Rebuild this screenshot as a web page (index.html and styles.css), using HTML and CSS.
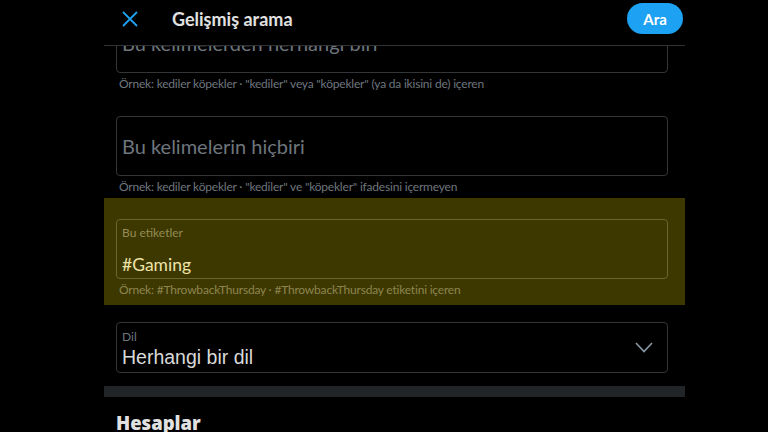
FILE: index.html
```html
<!DOCTYPE html>
<html lang="tr">
<head>
    <meta charset="UTF-8">
    <meta name="viewport" content="width=device-width, initial-scale=1.0">
    <title>Gelişmiş arama</title>
    <link rel="stylesheet" href="styles.css">
</head>
<body>

<div class="page">
    <header class="topbar">
        <button class="close-btn" aria-label="Kapat">
            <svg viewBox="0 0 16 16" width="16" height="16">
                <path d="M1.5 1.5 L14.5 14.5 M14.5 1.5 L1.5 14.5" stroke="#1da1f2" stroke-width="1.8" fill="none" stroke-linecap="round"/>
            </svg>
        </button>
        <h1>Gelişmiş arama</h1>
        <button class="search-btn">Ara</button>
    </header>

    <main class="scroller">
        <div class="form-body">
            <div class="field-group">
                <div class="field">
                    <span class="placeholder">Bu kelimelerden herhangi biri</span>
                </div>
                <p class="hint">Örnek: kediler köpekler · "kediler" veya "köpekler" (ya da ikisini de) içeren</p>
            </div>

            <div class="field-group">
                <div class="field">
                    <span class="placeholder">Bu kelimelerin hiçbiri</span>
                </div>
                <p class="hint">Örnek: kediler köpekler · "kediler" ve "köpekler" ifadesini içermeyen</p>
            </div>

            <div class="field-group marked">
                <div class="field filled">
                    <span class="field-label">Bu etiketler</span>
                    <span class="field-value">#Gaming</span>
                </div>
                <p class="hint">Örnek: #ThrowbackThursday · #ThrowbackThursday etiketini içeren</p>
            </div>

            <div class="field-group select-group">
                <div class="field select">
                    <div class="select-text">
                        <span class="field-label">Dil</span>
                        <span class="select-value">Herhangi bir dil</span>
                    </div>
                    <svg class="chevron" viewBox="0 0 18 11" width="18" height="11">
                        <path d="M1 1 L9 9.5 L17 1" stroke="#8b98a5" stroke-width="1.6" fill="none"/>
                    </svg>
                </div>
            </div>

            <div class="divider"></div>

            <section class="accounts">
                <h2>Hesaplar</h2>
            </section>
        </div>
    </main>
</div>

</body>
</html>
```

FILE: styles.css
```css
body {
    margin: 0;
    background-color: #000;
    font-family: Lato, "Open Sans", sans-serif;
    height: 432px;
    overflow: hidden;
}

.page {
    width: 581px;
    margin-left: 104px;
}

/* top bar */
.topbar {
    display: flex;
    align-items: center;
    height: 37px;
    padding-bottom: 8px;
    border-bottom: 1px solid #2f3336;
}

.close-btn {
    display: flex;
    padding: 0;
    margin-left: 18px;
    background: none;
    border: none;
}

.topbar h1 {
    margin: 0 0 0 34px;
    font-size: 18px;
    font-weight: 700;
    color: #e1e1e1;
}

.search-btn {
    margin-left: auto;
    margin-right: 2px;
    width: 56px;
    height: 31px;
    border: none;
    border-radius: 16px;
    background-color: #1da1f2;
    color: #fff;
    font-family: inherit;
    font-size: 15px;
    font-weight: 700;
}

/* scrolled form area */
.scroller {
    height: 386px;
    overflow: hidden;
}

.form-body {
    margin-top: -50px;
}

.field-group {
    padding: 17px 17px 0 12px;
}

.field {
    display: flex;
    flex-direction: column;
    justify-content: center;
    height: 60px;
    box-sizing: border-box;
    padding: 0 5px;
    border: 1px solid #333639;
    border-radius: 4px;
}

.placeholder {
    font-size: 20px;
    color: #6e767d;
}

.hint {
    margin: 0;
    height: 26px;
    padding: 3px 0 0 3px;
    box-sizing: border-box;
    font-size: 12px;
    line-height: 16px;
    letter-spacing: -0.2px;
    color: #6e767d;
}

/* highlighted hashtag field */
.marked {
    margin-top: -4px;
    padding-top: 21px;
    background-color: #3d3800;
}

.marked .field {
    border-color: #6b6330;
}

.marked .hint {
    color: #8d8550;
}

.field.filled {
    justify-content: flex-start;
    padding-top: 5px;
}

.field-label {
    font-size: 12px;
    line-height: 16px;
    color: #6e767d;
}

.marked .field-label {
    color: #948b55;
}

.field-value {
    margin-top: 12px;
    font-size: 17.5px;
    line-height: 24px;
    color: #efe4a8;
}

/* language select */
.select-group {
    padding-bottom: 13px;
}

.field.select {
    flex-direction: row;
    align-items: center;
    height: 51px;
}

.select-text {
    flex: 1;
    display: flex;
    flex-direction: column;
    padding-top: 1px;
}

.select-value {
    margin-top: 1px;
    font-family: "Liberation Sans", Arial, sans-serif;
    font-size: 19.5px;
    line-height: 22px;
    color: #d9d9d9;
}

.chevron {
    margin-right: 9px;
}

.divider {
    height: 11px;
    background-color: #222528;
}

.accounts {
    padding: 12px 12px 0;
}

.accounts h2 {
    margin: 0;
    font-family: "Open Sans", sans-serif;
    font-size: 18.5px;
    font-weight: 800;
    line-height: 28px;
    color: #e1e1e1;
}
```
